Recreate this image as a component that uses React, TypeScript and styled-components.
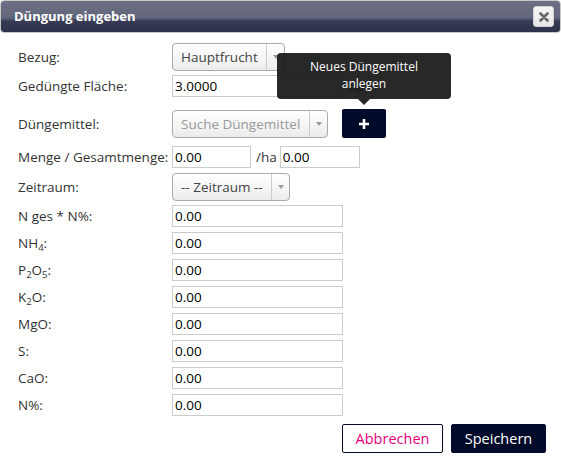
import React from "react";
import styled, { createGlobalStyle } from "styled-components";

const Global = createGlobalStyle`
  html, body { margin: 0; padding: 0; background: #fff; }
  body { font-family: "Open Sans", "DejaVu Sans", sans-serif; }
  * { box-sizing: border-box; }
`;

const Dialog = styled.div`
  width: 561px;
  height: 467px;
  background: #fff;
  display: flex;
  flex-direction: column;
  font-family: "Open Sans", sans-serif;
  color: #333;
`;

const TitleBar = styled.div`
  height: 33px;
  margin: 0;
  border: 1px solid #c9c9c9;
  border-radius: 4px;
  background: linear-gradient(
    to bottom,
    #6d7084 0%,
    #62667b 55%,
    #373b55 64%,
    #2d3149 100%
  );
  display: flex;
  align-items: center;
  justify-content: space-between;
  padding: 0 6px 0 13px;
`;

const Title = styled.span`
  color: #fff;
  font-weight: 700;
  font-size: 13px;
  margin-top: -1px;
`;

const CloseButton = styled.button`
  width: 21px;
  height: 21px;
  padding: 0;
  border: 1px solid #d3d3d3;
  border-radius: 3px;
  background: linear-gradient(#f6f6f6, #e6e6e6);
  display: flex;
  align-items: center;
  justify-content: center;
`;

const Body = styled.div`
  padding: 0 0 0 18px;
  display: flex;
  flex-direction: column;
`;

const Row = styled.div<{ $mt: number }>`
  display: flex;
  align-items: center;
  margin-top: ${(p) => p.$mt}px;
`;

const Label = styled.div`
  width: 154px;
  font-size: 13.5px;
  color: #333;
  white-space: nowrap;
  sub {
    font-size: 9.5px;
    vertical-align: -3px;
    line-height: 0;
  }
`;

const SelectBox = styled.div<{ $w: number; $placeholder?: boolean }>`
  width: ${(p) => p.$w}px;
  height: 28px;
  border: 1px solid #aaa;
  border-radius: 4px;
  background: linear-gradient(#ffffff 0%, #f4f4f4 60%, #ebebeb 100%);
  display: flex;
  align-items: stretch;
  font-size: 13.5px;
  color: ${(p) => (p.$placeholder ? "#999" : "#444")};
`;

const SelectText = styled.span`
  flex: 1;
  display: flex;
  align-items: center;
  padding-left: 8px;
  white-space: nowrap;
  overflow: hidden;
`;

const SelectArrow = styled.span`
  width: 18px;
  border-left: 1px solid #ccc;
  display: flex;
  align-items: center;
  justify-content: center;
  &::after {
    content: "";
    border-left: 3px solid transparent;
    border-right: 3px solid transparent;
    border-top: 4px solid #999;
  }
`;

const Input = styled.input<{ $w: number }>`
  width: ${(p) => p.$w}px;
  height: 22px;
  border: 1px solid #ccc;
  padding: 0 2px;
  font-family: "Open Sans", sans-serif;
  font-size: 13.5px;
  color: #000;
  background: #fff;
  outline: none;
`;

const Unit = styled.span`
  font-size: 13.5px;
  color: #333;
  margin: 0 3px 0 5px;
`;

const PlusWrap = styled.div`
  position: relative;
  margin-left: 14px;
`;

const PlusButton = styled.button`
  width: 44px;
  height: 29px;
  border: none;
  border-radius: 2px;
  background: #030a2a;
  color: #fff;
  display: flex;
  align-items: center;
  justify-content: center;
  padding: 0;
`;

const Tooltip = styled.div`
  position: absolute;
  left: 50%;
  bottom: 39px;
  transform: translateX(-50%);
  width: 174px;
  height: 46px;
  background: rgba(17, 17, 17, 0.9);
  border-radius: 4px;
  color: #fff;
  font-size: 12px;
  line-height: 17px;
  text-align: center;
  padding-top: 5px;
  &::after {
    content: "";
    position: absolute;
    left: 50%;
    bottom: -6px;
    margin-left: -6px;
    border-left: 6px solid transparent;
    border-right: 6px solid transparent;
    border-top: 6px solid rgba(17, 17, 17, 0.9);
  }
`;

const Footer = styled.div`
  display: flex;
  justify-content: flex-end;
  gap: 8px;
  padding-right: 15px;
  margin-top: 8px;
`;

const Button = styled.button<{ $primary?: boolean }>`
  height: 29px;
  width: ${(p) => (p.$primary ? 95 : 101)}px;
  padding: 0;
  border: 1px solid #030a2a;
  border-radius: 2px;
  background: ${(p) => (p.$primary ? "#030a2a" : "#fff")};
  color: ${(p) => (p.$primary ? "#fff" : "#e5007d")};
  font-family: "Open Sans", sans-serif;
  font-size: 14.5px;
`;

const Select = ({ w, text, placeholder }: { w: number; text: string; placeholder?: boolean }) => (
  <SelectBox $w={w} $placeholder={placeholder}>
    <SelectText>{text}</SelectText>
    <SelectArrow />
  </SelectBox>
);

const nutrients: React.ReactNode[] = [
  <>NH<sub>4</sub>:</>,
  <>P<sub>2</sub>O<sub>5</sub>:</>,
  <>K<sub>2</sub>O:</>,
  "MgO:",
  "S:",
  "CaO:",
  "N%:",
];

export default function App() {
  return (
    <>
      <Global />
      <Dialog>
        <TitleBar>
          <Title>Düngung eingeben</Title>
          <CloseButton aria-label="close">
            <svg width="10" height="10" viewBox="0 0 10 10">
              <path d="M1.5 1.5 L8.5 8.5 M8.5 1.5 L1.5 8.5" stroke="#666" strokeWidth="2.6" strokeLinecap="round" />
            </svg>
          </CloseButton>
        </TitleBar>
        <Body>
          <Row $mt={10}>
            <Label>Bezug:</Label>
            <Select w={113} text="Hauptfrucht" />
          </Row>
          <Row $mt={4}>
            <Label>Gedüngte Fläche:</Label>
            <Input $w={171} defaultValue="3.0000" />
            <Unit>ha</Unit>
          </Row>
          <Row $mt={12}>
            <Label>Düngemittel:</Label>
            <Select w={156} text="Suche Düngemittel" placeholder />
            <PlusWrap>
              <Tooltip>
                Neues Düngemittel
                <br />
                anlegen
              </Tooltip>
              <PlusButton aria-label="add">
                <svg width="12" height="12" viewBox="0 0 12 12">
                  <path d="M6 1 V11 M1 6 H11" stroke="#fff" strokeWidth="2.6" />
                </svg>
              </PlusButton>
            </PlusWrap>
          </Row>
          <Row $mt={8}>
            <Label>Menge / Gesamtmenge:</Label>
            <Input $w={79} defaultValue="0.00" />
            <Unit>/ha</Unit>
            <Input $w={80} defaultValue="0.00" />
          </Row>
          <Row $mt={5}>
            <Label>Zeitraum:</Label>
            <Select w={118} text="-- Zeitraum --" />
          </Row>
          <Row $mt={4}>
            <Label>N ges * N%:</Label>
            <Input $w={171} defaultValue="0.00" />
          </Row>
          {nutrients.map((n, i) => (
            <Row $mt={5} key={i}>
              <Label>{n}</Label>
              <Input $w={171} defaultValue="0.00" />
            </Row>
          ))}
        </Body>
        <Footer>
          <Button>Abbrechen</Button>
          <Button $primary>Speichern</Button>
        </Footer>
      </Dialog>
    </>
  );
}
